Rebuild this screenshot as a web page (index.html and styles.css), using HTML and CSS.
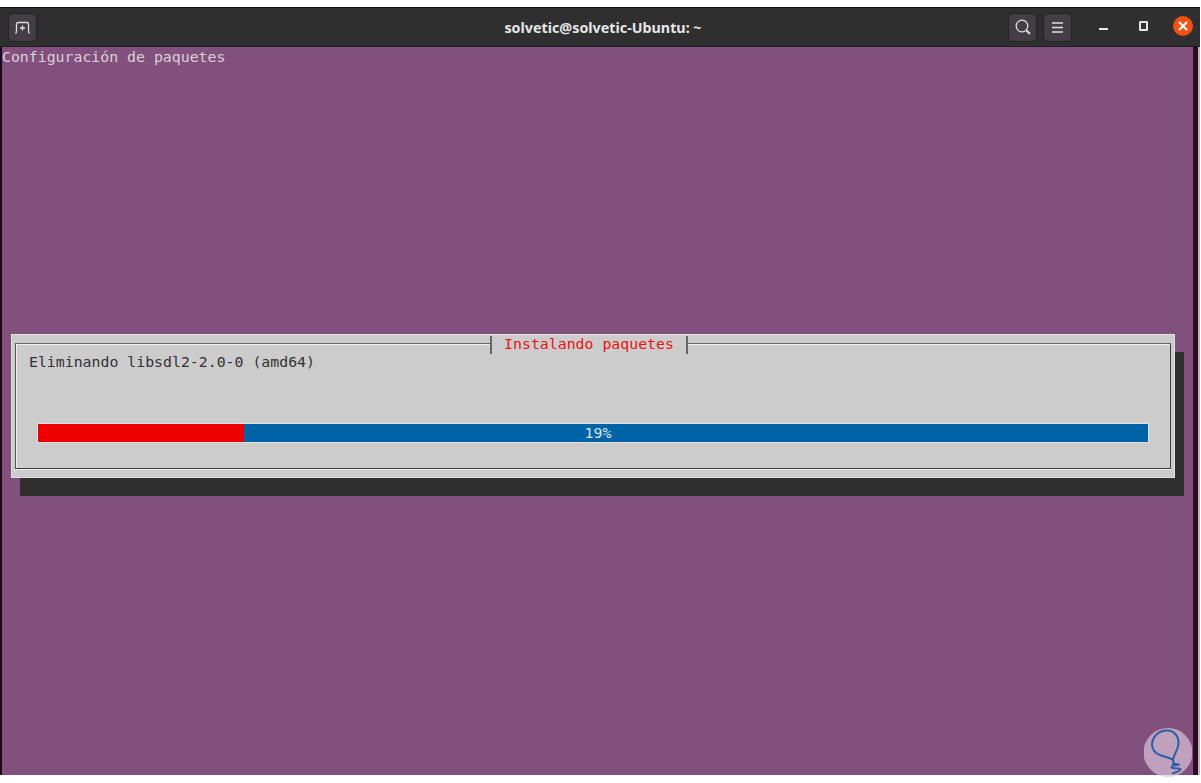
FILE: index.html
```html
<!DOCTYPE html>
<html lang="es">
<head>
<meta charset="utf-8">
<title>solvetic@solvetic-Ubuntu: ~</title>
<link rel="stylesheet" href="styles.css">
</head>
<body>
<div class="window">
  <header class="titlebar">
    <div class="bar-left">
      <button class="tool">
        <svg width="17" height="13" viewBox="0 0 17 13"><path class="stroke" d="M1.5 12.5C2.5 12 2.5 11 2.5 9V3Q2.5 1.5 4 1.5H13Q14.500 1.500 14.500 3V9C14.500 11 14.500 12 15.500 12.500"/><path class="stroke" d="M8.500 4.500V9.500M6 7H11"/></svg>
      </button>
    </div>
    <div class="title">solvetic@solvetic-Ubuntu: ~</div>
    <div class="bar-right">
      <button class="tool">
        <svg width="18" height="18" viewBox="0 0 18 18"><circle class="stroke" cx="8" cy="8" r="5.800"/><path class="stroke wide" d="M12.300 12.300L16 16"/></svg>
      </button>
      <button class="tool">
        <svg width="13" height="13" viewBox="0 0 13 13"><path class="stroke" d="M1 2H12M1 6.500H12M1 11H12"/></svg>
      </button>
      <div class="win-btn min"><span class="min-line"></span></div>
      <div class="win-btn max"><span class="max-box"></span></div>
      <div class="close">
        <svg width="10" height="10" viewBox="0 0 10 10"><path class="cross" d="M1 1L9 9M9 1L1 9"/></svg>
      </div>
    </div>
  </header>
  <main class="body-row">
    <div class="terminal">
      <div class="heading">Configuración de paquetes</div>
      <section class="dialog">
        <div class="frame">
          <div class="legend">Instalando paquetes</div>
          <div class="label">Eliminando libsdl2-2.0-0 (amd64)</div>
          <div class="progress">
            <div class="fill" style="width:18.55%"></div>
            <div class="rest">19%</div>
          </div>
        </div>
      </section>
    </div>
    <div class="edge"></div>
    <div class="scroll"></div>
  </main>
</div>
<div class="watermark">
  <svg width="48" height="50" viewBox="0 0 48 50"><circle class="wm-disc" cx="24" cy="24.500" r="24.500"/><path class="wm-line" d="M23 2.500C14 2.500 8.500 9 8 16C7.800 22 12 25.500 17 27.500C21 29 26 29.500 29 32C30 34 29.500 35.500 28.500 36.500C30 36 33 36 35.500 36.800C32 36.800 28 37.500 27.500 39.500C28 41 33 39.500 36.500 41C36.500 43.500 31 44.500 28 45.500M29 32C29.500 27 34 22 34.500 16C35 8 30 2.500 23 2.500"/></svg>
</div>
</body>
</html>
```
FILE: styles.css
```css
html, body {
  margin: 0;
  padding: 0;
  height: 783px;
  background: #fff;
  overflow: hidden;
}
body {
  position: relative;
  padding-top: 7px;
  box-sizing: border-box;
}
.window {
  margin-right: 1px;
  height: 768px;
  display: flex;
  flex-direction: column;
  background: #2f2f2f;
}
.titlebar {
  height: 40px;
  flex: none;
  box-sizing: border-box;
  border-top: 1px solid #111;
  border-bottom: 1px solid #1c1c1c;
  display: grid;
  grid-template-columns: 1fr auto 1fr;
  align-items: center;
  padding: 0 7px 0 8px;
  background: #2f2f2f;
}
.bar-left, .bar-right {
  display: flex;
  align-items: center;
}
.bar-right {
  justify-content: flex-end;
}
.title {
  margin-left: 5px;
  color: #e6e6e6;
  font: bold 14.300px "Noto Sans", "Liberation Sans", sans-serif;
}
.tool {
  width: 29px;
  height: 29px;
  padding: 0;
  margin: 0;
  box-sizing: border-box;
  border: 1px solid #232323;
  border-radius: 5px;
  background: #433e45;
  display: flex;
  align-items: center;
  justify-content: center;
}
.tool + .tool {
  margin-left: 6px;
}
.stroke {
  fill: none;
  stroke: #dedede;
  stroke-width: 1.300;
}
.wide {
  stroke-width: 2;
}
.win-btn {
  width: 9px;
  height: 29px;
  display: flex;
  justify-content: center;
}
.min {
  margin-left: 27px;
  align-items: flex-end;
}
.max {
  margin-left: 31px;
  align-items: center;
}
.min-line {
  display: block;
  width: 9px;
  height: 2px;
  margin-bottom: 12px;
  background: #e8e8e8;
}
.max-box {
  display: block;
  box-sizing: border-box;
  width: 9px;
  height: 10px;
  border: 2px solid #e4e4e4;
  border-radius: 1px;
  margin-bottom: 3px;
}
.close {
  width: 20px;
  height: 20px;
  margin: 0 0 2px 25px;
  border-radius: 50%;
  background: #f4500f;
  display: flex;
  align-items: center;
  justify-content: center;
}
.cross {
  stroke: #fff;
  stroke-width: 2.200;
  fill: none;
}
.body-row {
  flex: 1;
  min-height: 0;
  display: flex;
  background: #1a0a18;
  padding-left: 2px;
}
.terminal {
  width: 1191px;
  flex: none;
  background: #82507c;
  overflow: hidden;
}
.edge {
  width: 5px;
  flex: none;
  background: #300a24;
}
.scroll {
  width: 2px;
  flex: none;
  background: #b8b8b8;
}
.heading {
  height: 20px;
  color: #dcd0da;
  font: 14.850px/21px "DejaVu Sans Mono", monospace;
  white-space: pre;
}
.dialog {
  box-sizing: border-box;
  width: 1164px;
  height: 144px;
  margin: 267px 0 0 9px;
  padding: 8px 3px 8px;
  background: #cccccc;
  border: 1px solid #dde2dd;
  box-shadow: 9px 18px 0 #2f2f2f;
  font: 14.850px/18px "DejaVu Sans Mono", monospace;
}
.frame {
  box-sizing: border-box;
  height: 126px;
  border: 1px solid #3c3c3c;
  border-left-color: #555;
  border-top-color: #666;
  box-shadow: inset 1px 1px 0 #eef0ee, 0 1px 0 #eef0ee;
  display: flex;
  flex-direction: column;
}
.legend {
  align-self: flex-start;
  margin: -8px 0 0 474px;
  width: 198px;
  height: 18px;
  line-height: 16px;
  box-sizing: border-box;
  border-left: 2px solid #666;
  border-right: 2px solid #666;
  background: #cccccc;
  color: #ee1010;
  text-align: center;
  white-space: pre;
}
.label {
  margin: -1px 0 0 13px;
  height: 18px;
  color: #333;
  white-space: pre;
}
.progress {
  margin: 53px 0 0 22px;
  width: 1110px;
  height: 18px;
  display: flex;
  outline: 1px solid #dfe3df;
}
.fill {
  background: #ee0000;
}
.rest {
  flex: 1;
  background: #0063a8;
  color: #d6e4ee;
  text-align: center;
  padding-right: 196px;
  box-sizing: border-box;
  white-space: pre;
}
.watermark {
  position: absolute;
  left: 1144px;
  top: 728px;
  width: 48px;
  height: 50px;
  line-height: 0;
}
.wm-disc {
  fill: #dcc8dc;
  fill-opacity: 0.680;
}
.wm-line {
  fill: none;
  stroke: #2a5fa8;
  stroke-width: 2;
}
```
